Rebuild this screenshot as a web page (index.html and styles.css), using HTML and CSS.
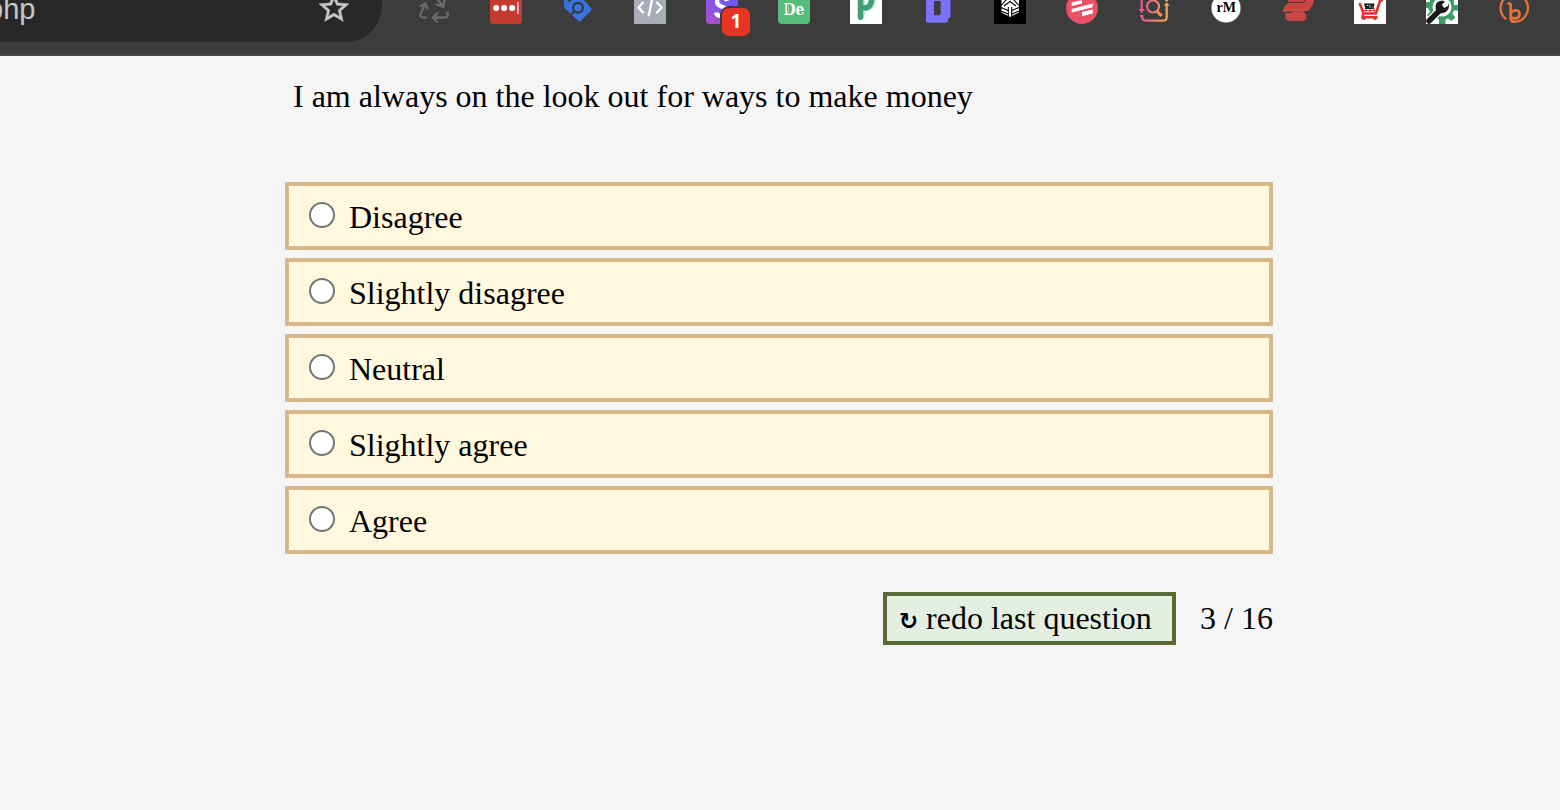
FILE: index.html
```html
<!DOCTYPE html>
<html lang="en">
<head>
<meta charset="utf-8">
<title>Questionnaire</title>
<link rel="stylesheet" href="styles.css">
</head>
<body>
<header class="toolbar">
  <div class="address">
    <span class="url">php</span>
    <svg class="star" viewBox="0 0 24 24"><path fill="#c7c7c7" stroke="#c7c7c7" stroke-width=".3" d="M22 9.24l-7.19-.62L12 2 9.19 8.63 2 9.24l5.46 4.73L5.82 21 12 17.27 18.18 21l-1.63-7.03L22 9.24zM12 15.4l-3.76 2.27 1-4.28-3.32-2.88 4.38-.38L12 6.1l1.71 4.04 4.38.38-3.32 2.88 1 4.28L12 15.4z"/></svg>
  </div>
  <div class="extensions">
    <svg class="ext" viewBox="0 0 32 24"><g fill="none" stroke="#6b6b6b" stroke-width="2.3" stroke-linecap="round" stroke-linejoin="round"><path d="M8 17.500H5Q1.500 17 2.500 14L7 4.500M2.700 6L7.500 3.500 9.500 8.500"/><path d="M29 12.500l.8 2Q30 17.500 27 17.500H15M19.500 13L14.800 17.500 19 22"/><path d="M19-1L25.500 6.500M26.500 0L25.500 6.800 18.500 4.500"/></g></svg>
    <svg class="ext" viewBox="0 0 32 24"><path fill="#c43b32" d="M0 0H32V21Q32 24 29 24H3Q0 24 0 21z"/><g fill="#fff"><circle cx="6.200" cy="8" r="3"/><circle cx="14.200" cy="8" r="3"/><circle cx="22.200" cy="8" r="3"/></g><path fill="#f0b9b4" d="M27 2h1.800v12H27z"/></svg>
    <svg class="ext" viewBox="0 0 32 24"><path fill="#3973e0" d="M2-2H20L29 8Q30 9.500 29 10.500L19 20.700Q17.500 22 16 20.700L3 8.500Q2 7 2 6z"/><circle cx="7.300" cy="0" r="2" fill="#3c3c3c"/><g fill="none" stroke="#303640" stroke-width="2.200"><circle cx="16" cy="7.800" r="4.900"/><path d="M12.500 11.300l-3.200 3"/></g></svg>
    <svg class="ext" viewBox="0 0 32 24"><path fill="#a9adb8" d="M0 0h32v24H0z"/><path fill="none" stroke="#fff" stroke-width="2.300" stroke-linecap="round" stroke-linejoin="round" d="M9 2.500L4.600 7.500 9 12.500M18 0L14.800 15.300M23 2.500L27.600 7.500 23 12.500"/></svg>
    <div class="ext-badged">
      <svg class="ext" viewBox="0 0 32 24"><defs><linearGradient id="violet" x1="0" y1="1" x2="1" y2="0"><stop offset="0" stop-color="#ae4fc8"/><stop offset="1" stop-color="#6657fa"/></linearGradient></defs><path fill="url(#violet)" d="M0 0H32V24H4Q0 24 0 20z"/><path d="M21 1Q20-3 15-3 11-2 11 1.500 11 5 15.500 6.500 20.500 8 20 12 19 16 15 16 10.500 16 10 12.500" fill="none" stroke="#fff" stroke-width="4.300"/></svg>
      <span class="badge">1</span>
    </div>
    <svg class="ext" viewBox="0 0 32 24"><path fill="#57bb79" d="M0 0H32V20Q32 24 28 24H4Q0 24 0 20z"/><text class="mark-de" x="5.500" y="15" textLength="21" lengthAdjust="spacingAndGlyphs">De</text><path d="M9.500 4v9" stroke="#57bb79" stroke-width="1"/></svg>
    <svg class="ext" viewBox="0 0 32 24"><path fill="#fff" d="M0 0h32v24H0z"/><g fill="none" stroke-linecap="round" stroke-width="5.500"><path stroke="#b5e8da" d="M12-2V16M12 8.500H17Q23.500 7 23-3"/><path stroke="#419f78" d="M10.500-2V17.200M11 7.800H16Q22 6.500 21.500-3"/></g></svg>
    <svg class="ext" viewBox="0 0 32 24"><path fill="#7d73f6" fill-rule="evenodd" d="M4 0H28.500V17Q28.500 18.300 26 18.300V21Q26 22.800 24 22.800H5.500Q4 22.800 4 21zM12 2Q12 1 13 1H17.500Q18.700 1 18.700 3V13Q18.700 15.200 17 15.200H12z"/></svg>
    <svg class="ext" viewBox="0 0 32 24"><path fill="#000" d="M0 0h32v24H0z"/><path fill="#fff" d="M7.500-1H25V12.500L16 17 7.500 12.500z"/><path fill="none" stroke="#000" stroke-width="1.100" d="M14.300 7V18M17.700 7V18M7 5.500L13-1M25 5.500L19-1M10 6L16 1.500 22 6M7 7.500L14 10.500M25 7.500L18 10.500M7 11L14 14M25 11L18 14"/></svg>
    <svg class="ext" viewBox="0 0 32 24"><circle cx="16" cy="8" r="16" fill="#eb5165"/><path fill="#fff" d="M5.700 2.500L16 0V3.500L5.700 6zM5.700 9L26.700 3.500V7.300L5.700 12.500zM16 12L26.700 9.500V13.500L16 16.200z"/></svg>
    <svg class="ext" viewBox="0 0 32 24"><defs><linearGradient id="sunset" gradientUnits="userSpaceOnUse" x1="2" y1="0" x2="30" y2="0"><stop offset="0" stop-color="#e2559b"/><stop offset=".5" stop-color="#ef7a70"/><stop offset="1" stop-color="#f2a95c"/></linearGradient></defs><g fill="none" stroke="url(#sunset)" stroke-width="2.200"><path d="M3.700-1V11M3.700 15.500Q4 20.700 8 20.700H25Q28.700 20.700 28.700 17V5"/><circle cx="15" cy="6.500" r="6"/><path stroke-width="3.200" d="M18.500 10.500L23.500 16"/></g><path fill="url(#sunset)" d="M.8 9H6.600L3.700 13.500zM25.800 6H31.600L28.700 2zM1.700 15H5.500V18H3zM27 0h3v1.200h-3z"/></svg>
    <svg class="ext" viewBox="0 0 32 24"><circle cx="16" cy="8" r="15" fill="#fff" stroke="#2b2b2b" stroke-width=".6"/><text class="mark-rm" x="6.500" y="12" textLength="19.500" lengthAdjust="spacingAndGlyphs">rM</text></svg>
    <svg class="ext" viewBox="0 0 32 24"><path fill="#c94743" d="M6-2H31.500Q33 3 29 7.500 26.500 11.800 21 11.800H.5L2.500 6.500Q3.500 4.500 6 4z"/><path fill="#c94743" d="M4.500 12H21Q24.500 14 24.500 17 24 21 20 21H8Q3 21 3 16 3 14 4.500 12z"/><path d="M6 2.500H20Q24 2.500 24-1M4 12.500H10" fill="none" stroke="#3c3c3c" stroke-width="1"/><path d="M5 7.300H20" stroke="#b03d3a" stroke-width=".8"/></svg>
    <svg class="ext" viewBox="0 0 32 24"><path fill="#fff" d="M0 0h32v24H0z"/><g fill="none" stroke="#dc342f" stroke-linecap="round"><path stroke-width="2.600" d="M28 .5H26L22 13.500H9.500L6 4M9.500 13.500L8.500 17.300H22.500"/><path stroke-width="1" d="M9 10.500H21M12 8v5M16 9v4M20 8v4"/></g><circle cx="10" cy="18" r="2" fill="#dc342f"/><circle cx="21" cy="18" r="2" fill="#dc342f"/><path fill="#181818" d="M10 3.500H20.500L19.500 9H11.500z"/><path stroke="#fff" stroke-width=".8" d="M12.500 5.500h2M16 5v3M18 7h1"/></svg>
    <svg class="ext" viewBox="0 0 32 24"><path fill="#fff" d="M0 0h32v24H0z"/><path fill="#419d64" d="M4 0H28V5H32V10.500H28L26.500 14 29.500 17.500 25.500 21 22 18.500 19.500 19.700V24H13V19.500L9 17 5 20 1 15 4 12 2 8H0V2H4z"/><circle cx="16" cy="7" r="9.500" fill="#fff"/><path stroke="#fff" stroke-width="8" d="M3.500 20.500L14 10"/><path stroke="#191919" stroke-width="5.500" stroke-linecap="round" d="M3 21L14 10"/><path fill="#191919" d="M10.500 11Q7.500 3 14 1 17-.5 19 2L15.800 4.500 18 8 22 6V3Q24.500 8 20.500 11.500 17 14 13.500 13z"/></svg>
    <svg class="ext" viewBox="0 0 32 24"><g fill="none" stroke="#e4703a" stroke-width="2.400" stroke-linecap="round"><path d="M7.500 18.500A13.700 13.700 0 1 1 16 21.700"/><path stroke-width="2.700" d="M16 21.700Q12.700 21.500 12.700 18V5.500Q12.700 2.800 10.500 3.500"/><path stroke-width="2.700" d="M12.700 12.500C17 9 22 10 21.500 14.500 21 19 16 19.500 12.700 16.500"/></g></svg>
  </div>
</header>
<main class="quiz">
  <p class="question">I am always on the look out for ways to make money</p>
  <form class="answers">
    <label class="answer"><input class="choice" type="radio" name="a"><span>Disagree</span></label>
    <label class="answer"><input class="choice" type="radio" name="a"><span>Slightly disagree</span></label>
    <label class="answer"><input class="choice" type="radio" name="a"><span>Neutral</span></label>
    <label class="answer"><input class="choice" type="radio" name="a"><span>Slightly agree</span></label>
    <label class="answer"><input class="choice" type="radio" name="a"><span>Agree</span></label>
  </form>
  <footer class="progress">
    <button class="redo" type="button"><span class="redo-icon">↻</span><span>redo last question</span></button>
    <span class="count">3 / 16</span>
  </footer>
</main>
</body>
</html>
```
FILE: styles.css
```css
* { box-sizing: border-box; }
body {
  margin: 0;
  height: 810px;
  overflow: hidden;
  background: #f5f5f5;
  color: #000;
  font-family: "Liberation Serif", "Times New Roman", serif;
  font-size: 32px;
}
.toolbar {
  display: flex;
  align-items: flex-start;
  height: 56px;
  background: #3c3c3c;
  border-bottom: 2px solid #474747;
}
.address {
  display: flex;
  justify-content: space-between;
  width: 382px;
  height: 42px;
  padding-right: 30px;
  background: #282828;
  border-bottom-right-radius: 34px 38px;
  overflow: hidden;
}
.url {
  margin: -7px 0 0 -13px;
  color: #c7c7c7;
  font: 29px/32px "Liberation Sans", Arial, sans-serif;
}
.star { width: 36px; height: 36px; margin-top: -10px; }
.extensions { display: flex; gap: 40px; margin-left: 36px; }
.ext { display: block; flex: none; width: 32px; height: 24px; }
.ext-badged { position: relative; width: 32px; }
.badge {
  position: absolute;
  left: 14px;
  top: 6px;
  width: 32px;
  height: 32px;
  border: 2px solid #3c3c3c;
  border-radius: 9px;
  background: #e93323;
  color: #fff;
  font: bold 19px/27px "Open Sans", sans-serif;
  text-align: center;
}
.mark-de { font: bold 17px "DejaVu Serif", serif; fill: #fff; }
.mark-rm { font: bold 15px "Liberation Serif", serif; fill: #000; }
.quiz { width: 988px; margin-left: 285px; padding-top: 21px; }
.question { margin: 0 0 67px; padding-left: 8px; line-height: 38px; }
.answers { display: grid; gap: 8px; }
.answer {
  display: flex;
  align-items: flex-start;
  gap: 14px;
  height: 68px;
  padding: 16px 20px 0;
  border: 4px solid #d8b88b;
  background: #fff8df;
  line-height: 31px;
}
.choice {
  appearance: none;
  width: 26px;
  height: 26px;
  margin: 0;
  border: 2px solid #767676;
  border-radius: 50%;
  background: #fff;
}
.progress { display: flex; justify-content: flex-end; gap: 24px; margin-top: 38px; line-height: 53px; }
.redo {
  display: flex;
  gap: 8px;
  width: 293px;
  height: 53px;
  padding: 0 0 0 12px;
  border: 4px solid #5a6b38;
  background: #e3efe0;
  color: #000;
  font: inherit;
  line-height: 45px;
  white-space: nowrap;
}
.redo-icon { width: 19px; font: bold 23px/50px "DejaVu Sans", sans-serif; }
```
